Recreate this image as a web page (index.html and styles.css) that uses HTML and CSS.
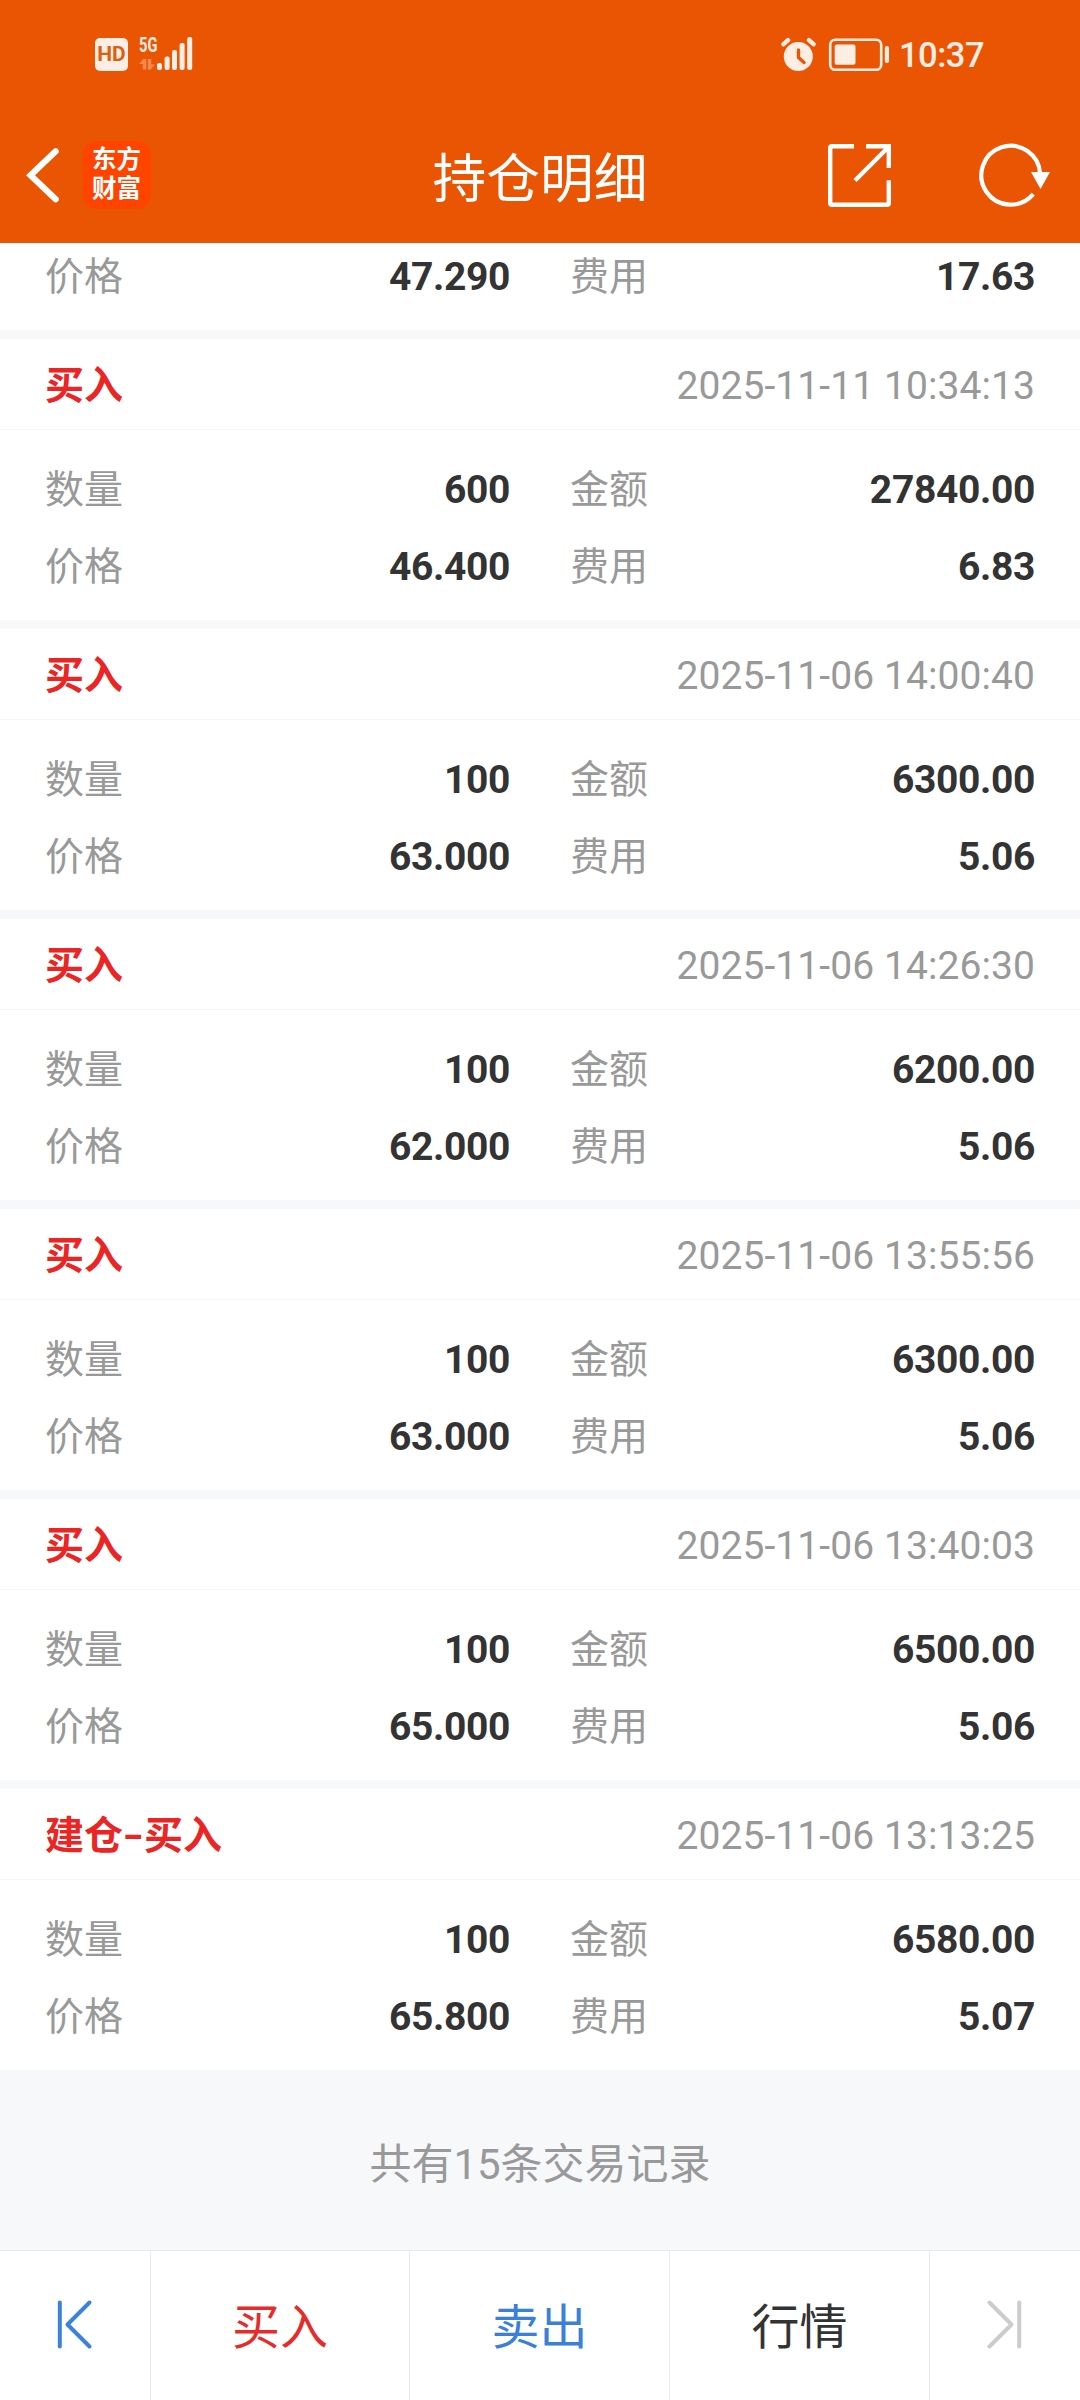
FILE: index.html
```html
<!DOCTYPE html>
<html lang="zh-CN">
<head>
<meta charset="utf-8">
<title>持仓明细</title>
<link rel="stylesheet" href="styles.css">
</head>
<body>
<header class="top">
  <div class="status">
    <div class="status-left">
      <span class="hd">HD</span>
      <div class="net">
        <span class="net-type">5G</span>
        <svg class="signal" width="56" height="36" viewBox="138 36 56 36">
          <g stroke="#f58a50" stroke-width="3.4" fill="#f58a50"><path d="M144.500 59V69.500M149.500 59V69.500"/><path d="M139 64L144 58.500V64ZM155 64.500L150 70V64.500Z" stroke="none"/></g>
          <g fill="#fdeee5"><rect x="157" y="63" width="5" height="7" rx="2"/><rect x="164.600" y="56.500" width="5" height="13.500" rx="2"/><rect x="172" y="50" width="5" height="20" rx="2"/><rect x="179.600" y="43" width="5" height="27" rx="2"/><rect x="187.200" y="37" width="5" height="33" rx="2"/></g>
        </svg>
      </div>
    </div>
    <div class="status-right">
      <svg width="108" height="36" viewBox="781 36 108 36">
        <circle cx="798.300" cy="56.500" r="14.500" fill="#fdeee5"/>
        <path d="M783.500 44.200L788 40.200M813.500 44.200L809 40.200" stroke="#fdeee5" stroke-width="4.400" stroke-linecap="round"/>
        <path d="M798.500 50V57.500L804 62.500" fill="none" stroke="#ea5504" stroke-width="3.400" stroke-linecap="round" stroke-linejoin="round"/>
        <rect x="830.200" y="39.700" width="51" height="30" rx="5" fill="none" stroke="#fdeee5" stroke-width="2.600"/>
        <rect x="834.700" y="44.500" width="20.800" height="20.300" rx="2" fill="#fdeee5"/>
        <rect x="884.800" y="46" width="4.200" height="17" rx="2" fill="#fdeee5"/>
      </svg>
      <span class="clock">10:37</span>
    </div>
  </div>
  <div class="titlebar">
    <div class="side">
      <svg class="back" width="36" height="60" viewBox="25 145 36 60"><path d="M55.700 151.300L30.500 175.300L55.700 199.300" fill="none" stroke="#fff" stroke-width="6.200" stroke-linecap="round" stroke-linejoin="miter"/></svg>
      <div class="logo"><span>东方</span><span>财富</span></div>
    </div>
    <h1 class="title">持仓明细</h1>
    <div class="side side-right">
      <svg width="64" height="64" viewBox="828 143 64 64"><g fill="none" stroke="#fff" stroke-width="4.400"><path d="M854 146.200H832Q830.200 146.200 830.200 148V203Q830.200 204.800 832 204.800H887Q888.800 204.800 888.800 203V180.300"/><path d="M866 146.200H888.800V168M855 180.500L888 147.500"/></g></svg>
      <svg width="72" height="64" viewBox="979 143 72 64"><path d="M1033.200 194.200A29.400 29.400 0 1 1 1040.100 174" fill="none" stroke="#fff" stroke-width="4.200"/><path d="M1031 172H1050L1040.500 189Z" fill="#fff"/></svg>
    </div>
  </div>
</header>

<main class="list">
  <section class="card clipped">
    <div class="body"><div class="row"><span class="label">价格</span><b class="value">47.290</b><span class="label">费用</span><b class="value">17.63</b></div></div>
  </section>
  <section class="card">
    <div class="head"><span class="kind">买入</span><time class="time">2025-11-11 10:34:13</time></div>
    <div class="body">
      <div class="row"><span class="label">数量</span><b class="value">600</b><span class="label">金额</span><b class="value">27840.00</b></div>
      <div class="row"><span class="label">价格</span><b class="value">46.400</b><span class="label">费用</span><b class="value">6.83</b></div>
    </div>
  </section>
  <section class="card">
    <div class="head"><span class="kind">买入</span><time class="time">2025-11-06 14:00:40</time></div>
    <div class="body">
      <div class="row"><span class="label">数量</span><b class="value">100</b><span class="label">金额</span><b class="value">6300.00</b></div>
      <div class="row"><span class="label">价格</span><b class="value">63.000</b><span class="label">费用</span><b class="value">5.06</b></div>
    </div>
  </section>
  <section class="card">
    <div class="head"><span class="kind">买入</span><time class="time">2025-11-06 14:26:30</time></div>
    <div class="body">
      <div class="row"><span class="label">数量</span><b class="value">100</b><span class="label">金额</span><b class="value">6200.00</b></div>
      <div class="row"><span class="label">价格</span><b class="value">62.000</b><span class="label">费用</span><b class="value">5.06</b></div>
    </div>
  </section>
  <section class="card">
    <div class="head"><span class="kind">买入</span><time class="time">2025-11-06 13:55:56</time></div>
    <div class="body">
      <div class="row"><span class="label">数量</span><b class="value">100</b><span class="label">金额</span><b class="value">6300.00</b></div>
      <div class="row"><span class="label">价格</span><b class="value">63.000</b><span class="label">费用</span><b class="value">5.06</b></div>
    </div>
  </section>
  <section class="card">
    <div class="head"><span class="kind">买入</span><time class="time">2025-11-06 13:40:03</time></div>
    <div class="body">
      <div class="row"><span class="label">数量</span><b class="value">100</b><span class="label">金额</span><b class="value">6500.00</b></div>
      <div class="row"><span class="label">价格</span><b class="value">65.000</b><span class="label">费用</span><b class="value">5.06</b></div>
    </div>
  </section>
  <section class="card">
    <div class="head"><span class="kind">建仓<span class="dash">-</span>买入</span><time class="time">2025-11-06 13:13:25</time></div>
    <div class="body">
      <div class="row"><span class="label">数量</span><b class="value">100</b><span class="label">金额</span><b class="value">6580.00</b></div>
      <div class="row"><span class="label">价格</span><b class="value">65.800</b><span class="label">费用</span><b class="value">5.07</b></div>
    </div>
  </section>
</main>

<p class="summary">共有15条交易记录</p>

<nav class="nav">
  <span class="nav-item"><svg width="40" height="52" viewBox="56 2297 40 52"><path d="M60.800 2301.500V2345.500M90.500 2301.500L68.500 2323.500L90.500 2345.500" fill="none" stroke="#3c82d6" stroke-width="4" stroke-linecap="round" stroke-linejoin="round"/></svg></span>
  <span class="nav-item nav-text buy">买入</span>
  <span class="nav-item nav-text sell">卖出</span>
  <span class="nav-item nav-text">行情</span>
  <span class="nav-item"><svg width="40" height="52" viewBox="986 2297 40 52"><path d="M1020.200 2301.500V2345.500M990.500 2301.500L1012.500 2323.500L990.500 2345.500" fill="none" stroke="#ccc" stroke-width="4" stroke-linecap="round" stroke-linejoin="round"/></svg></span>
</nav>
</body>
</html>
```
FILE: styles.css
```css
* { box-sizing: border-box; }

body {
  margin: 0;
  width: 1080px;
  height: 2400px;
  overflow: hidden;
  display: flex;
  flex-direction: column;
  background: #f7f8fa;
  color: #333;
  font: 39px/1 Roboto, "Noto Sans CJK SC", sans-serif;
}

svg { display: block; flex: none; }

/* Status bar and title */
.top {
  flex: none;
  height: 243px;
  background: #ea5504;
  color: #fff;
}

.status {
  height: 108px;
  display: flex;
  justify-content: space-between;
  padding: 0 97px 0 95px;
  color: #fdeee5;
}

.status-left { display: flex; gap: 10px; padding-top: 36px; }

.hd {
  width: 33px;
  height: 33px;
  margin-top: 2px;
  border-radius: 5px;
  background: #fdeee5;
  color: #d9600f;
  font-size: 21px;
  font-weight: 700;
  line-height: 33px;
  text-align: center;
}

.net { position: relative; }

.net-type {
  position: absolute;
  left: 1px;
  top: -1px;
  font-size: 21px;
  font-weight: 700;
  line-height: 20px;
  transform: scaleX(.7);
  transform-origin: left;
}

.status-right { display: flex; gap: 10px; padding-top: 36px; }

.clock {
  width: 84px;
  font-size: 34.500px;
  font-weight: 500;
  line-height: 39px;
  letter-spacing: -0.5px;
  white-space: nowrap;
}

.titlebar {
  height: 134px;
  display: flex;
  justify-content: space-between;
  align-items: center;
}

.side {
  width: 252px;
  display: flex;
  align-items: center;
}

.back { margin-left: 25px; }

.logo {
  width: 68px;
  height: 68px;
  margin-left: 22px;
  padding: 5px 0 0 9px;
  border-radius: 14px;
  background: #ff4400;
  display: flex;
  flex-direction: column;
  font-size: 24.500px;
  font-weight: 700;
  line-height: 28.500px;
}

.side-right { justify-content: space-between; padding-right: 29px; }

.title {
  margin: 0;
  padding-top: 10px;
  font-size: 53.700px;
  font-weight: 400;
  line-height: 80px;
}

/* Trade records */
.list {
  flex: none;
  display: flex;
  flex-direction: column;
  gap: 9px;
  overflow: hidden;
}

.card { background: #fff; }
.card.clipped { height: 87px; }
.card.clipped .body { padding-top: 0; margin-top: -6px; }

.head {
  height: 91px;
  padding: 5px 45px 0;
  display: flex;
  justify-content: space-between;
  align-items: center;
  border-bottom: 1px solid #f5f6f8;
}

.kind { color: #eb2424; font-weight: 700; }

.dash {
  display: inline-block;
  width: 21px;
  text-align: center;
  transform: scaleX(1.450);
}

.time { color: #999; letter-spacing: 0.080px; }

.body { padding: 20px 45px 16px; }

.row {
  height: 77px;
  padding-top: 3px;
  display: grid;
  grid-template-columns: 78px 387px 138px 1fr;
  align-items: center;
}

.label { color: #999; }
.label:nth-child(3) { padding-left: 60px; }
.value { font-weight: 700; text-align: right; letter-spacing: -0.350px; }

/* Footer */
.summary {
  flex: none;
  height: 180px;
  margin: 0;
  color: #999;
  font-size: 42px;
  line-height: 189px;
  text-align: center;
}

.nav {
  flex: none;
  height: 150px;
  display: grid;
  grid-template-columns: 151px 259px 260px 260px 150px;
  border-top: 1px solid #e8eaed;
  background: #fff;
  font-size: 48px;
}

.nav-item {
  display: flex;
  align-items: center;
  justify-content: center;
  border-right: 1px solid #ebebed;
  padding-bottom: 3px;
}

.nav-item:last-child { border-right: 0; }
.nav-text { padding: 5px 0 0; }
.buy { color: #e62b2b; }
.sell { color: #3a80d8; }
```
